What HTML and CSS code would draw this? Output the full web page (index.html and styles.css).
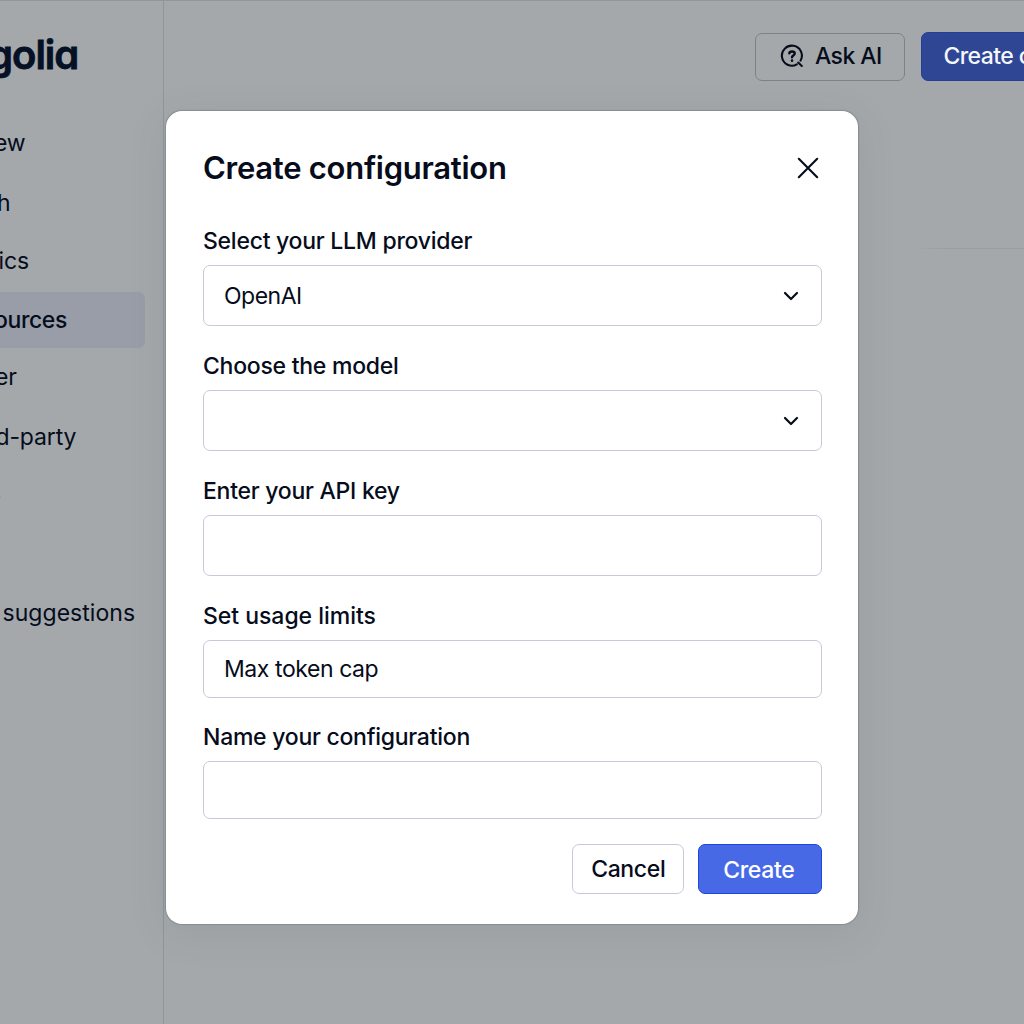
FILE: index.html
```html
<!DOCTYPE html>
<html lang="en">
<head>
<meta charset="utf-8">
<title>Create configuration</title>
<link rel="stylesheet" href="styles.css">
</head>
<body>
<div class="app">
  <aside class="sidebar">
    <div class="logo">golia</div>
    <nav class="nav">
      <a class="nav-item first"><span class="nav-text shift-ew">ew</span></a>
      <a class="nav-item"><span class="nav-text shift-h">h</span></a>
      <a class="nav-item"><span class="nav-text shift-ics">ics</span></a>
      <a class="nav-item active"><span class="nav-text shift-ources">ources</span></a>
      <a class="nav-item after-active"><span class="nav-text shift-er">er</span></a>
      <a class="nav-item"><span class="nav-text shift-party">d-party</span></a>
      <a class="nav-item"><span class="nav-text shift-e">e</span></a>
      <a class="nav-item"></a>
      <a class="nav-item"><span class="nav-text shift-sugg">suggestions</span></a>
    </nav>
  </aside>
  <main class="main">
    <header class="toolbar">
      <button class="top-btn ask">
        <svg width="24" height="26" viewBox="0 0 24 26" fill="none" stroke="currentColor" stroke-width="2.1" stroke-linecap="round" stroke-linejoin="round">
          <path d="M16.8 21.4A10 10 0 1 1 20.6 17.6M18.2 19.6L21.8 23"/>
          <path stroke-width="2.4" d="M9.3 10.4C9.5 7.8 14.7 7.7 14.7 10.5C14.7 12.4 12 12.4 12 14.2"/>
          <path stroke-width="2.5" d="M12 17.6v.1"/>
        </svg>
        <span class="ask-text">Ask AI</span>
      </button>
      <button class="top-btn primary"><span class="top-create">Create configuration</span></button>
    </header>
    <hr class="rule">
  </main>
</div>
<div class="overlay">
  <section class="modal" role="dialog">
    <div class="modal-head">
      <h1 class="title">Create configuration</h1>
      <svg class="close" width="22" height="22" viewBox="0 0 22 22" fill="none" stroke="currentColor" stroke-width="2.1" stroke-linecap="round"><path d="M1.8 1.8L20.2 20.2M20.2 1.8L1.8 20.2"/></svg>
    </div>
    <div class="field">
      <div class="label">Select your LLM provider</div>
      <div class="box"><span class="value tight">OpenAI</span>
        <svg class="chev" width="16" height="10" viewBox="0 0 16 10" fill="none" stroke="currentColor" stroke-width="2.2" stroke-linecap="round" stroke-linejoin="round"><path d="M2 2L8 8L14 2"/></svg>
      </div>
    </div>
    <div class="field">
      <div class="label">Choose the model</div>
      <div class="box"><span></span>
        <svg class="chev" width="16" height="10" viewBox="0 0 16 10" fill="none" stroke="currentColor" stroke-width="2.2" stroke-linecap="round" stroke-linejoin="round"><path d="M2 2L8 8L14 2"/></svg>
      </div>
    </div>
    <div class="field">
      <div class="label">Enter your API key</div>
      <div class="box"></div>
    </div>
    <div class="field">
      <div class="label limits">Set usage limits</div>
      <div class="box short"><span class="value">Max token cap</span></div>
    </div>
    <div class="field">
      <div class="label">Name your configuration</div>
      <div class="box short"></div>
    </div>
    <div class="actions">
      <button class="btn cancel">Cancel</button>
      <button class="btn create">Create</button>
    </div>
  </section>
</div>
</body>
</html>
```
FILE: styles.css
```css
* { box-sizing: border-box; }
body {
  margin: 0;
  height: 1024px;
  overflow: hidden;
  background: #a4a8ab;
  color: #060c1b;
  font-family: Inter, "Liberation Sans", sans-serif;
}
button { font: inherit; color: inherit; margin: 0; padding: 0; }
.app { display: flex; height: 1024px; border-top: 1px solid #8f969c; }
.sidebar {
  flex: none;
  width: 164px;
  overflow: hidden;
  border-right: 1px solid #8f969b;
}
.logo {
  height: 115px;
  padding-top: 29px;
  margin-left: -12px;
  font-size: 40px;
  line-height: 50px;
  font-weight: 600;
  letter-spacing: -1px;
  color: #061125;
  -webkit-text-stroke: .8px #061125;
  font-feature-settings: "cv11";
}
.nav { display: flex; flex-direction: column; gap: 3px; }
.nav-item {
  display: flex;
  align-items: center;
  width: 145px;
  height: 55.7px;
  white-space: nowrap;
  font-size: 23px;
  letter-spacing: -.15px;
}
.first { padding-bottom: 2px; }
.active {
  background: #989da8;
  border-radius: 0 7px 7px 0;
  font-weight: 500;
  letter-spacing: -.4px;
}
.after-active { padding-bottom: 3px; }
.shift-ew { margin-left: -6px; }
.shift-h { margin-left: -3px; }
.shift-ics { margin-left: -1.5px; }
.shift-ources { margin-left: -6px; }
.shift-er { margin-left: -5px; }
.shift-party { margin-left: -4.5px; }
.shift-e { margin-left: -12.5px; }
.shift-sugg { margin-left: 2.5px; letter-spacing: .05px; }
.main { flex: 1; min-width: 0; overflow: hidden; }
.toolbar { display: flex; gap: 16px; padding: 31px 0 0 591px; }
.top-btn {
  flex: none;
  display: flex;
  align-items: center;
  height: 49px;
  border-radius: 7px;
  font-size: 23px;
  font-weight: 500;
  letter-spacing: -.6px;
  white-space: nowrap;
}
.ask { width: 150px; height: 48px; margin-top: 1px; padding: 0 0 2px 24px; gap: 11px; background: none; border: 1px solid #7b8288; }
.primary { width: 280px; padding: 0 0 1px 21.5px; background: #2f4695; border: 1px solid #263f96; color: #f4f6fb; }
.rule { margin: 167px 0 0 748px; border: 0; height: 1px; background: linear-gradient(90deg, #a4a8ab, #999ea3 30px); }
.overlay {
  position: absolute;
  inset: 0;
  padding: 111px 0 0 166px;
}
.modal {
  width: 692px;
  height: 813px;
  padding: 37px 36.5px 0 37px;
  background: #fff;
  border-radius: 16px;
  box-shadow: 0 0 1px 1px #868e93, 0 8px 40px rgba(60, 70, 80, .1);
}
.modal-head {
  display: flex;
  justify-content: space-between;
  align-items: center;
  height: 40px;
  margin-bottom: 41px;
  padding-right: 3px;
}
.title { margin: 0; font-size: 31px; font-weight: 600; line-height: 40px; letter-spacing: -.27px; white-space: nowrap; }
.field { margin-bottom: 28px; }
.label { height: 24px; margin-bottom: 12px; font-size: 23px; line-height: 24px; font-weight: 500; letter-spacing: -.26px; white-space: nowrap; }
.limits { letter-spacing: -.03px; }
.box {
  display: flex;
  align-items: center;
  justify-content: space-between;
  height: 61px;
  padding: 0 22px 0 20px;
  border: 1px solid #c6cad8;
  border-radius: 7px;
  font-size: 23px;
}
.value { letter-spacing: -.42px; }
.tight { letter-spacing: -.5px; }
.short { height: 58px; }
.field:has(.short) { margin-bottom: 27px; }
.actions { display: flex; justify-content: flex-end; gap: 14px; margin-top: -2px; }
.btn { height: 50px; border-radius: 7px; font-size: 23px; font-weight: 500; letter-spacing: -.35px; }
.cancel { width: 112.5px; padding-left: 1px; background: #fff; border: 1px solid #c6cad8; }
.create { width: 123.5px; padding: 2px 2px 0 0; background: #4769e6; border: 1px solid #1f45e0; color: #fff; }
```
